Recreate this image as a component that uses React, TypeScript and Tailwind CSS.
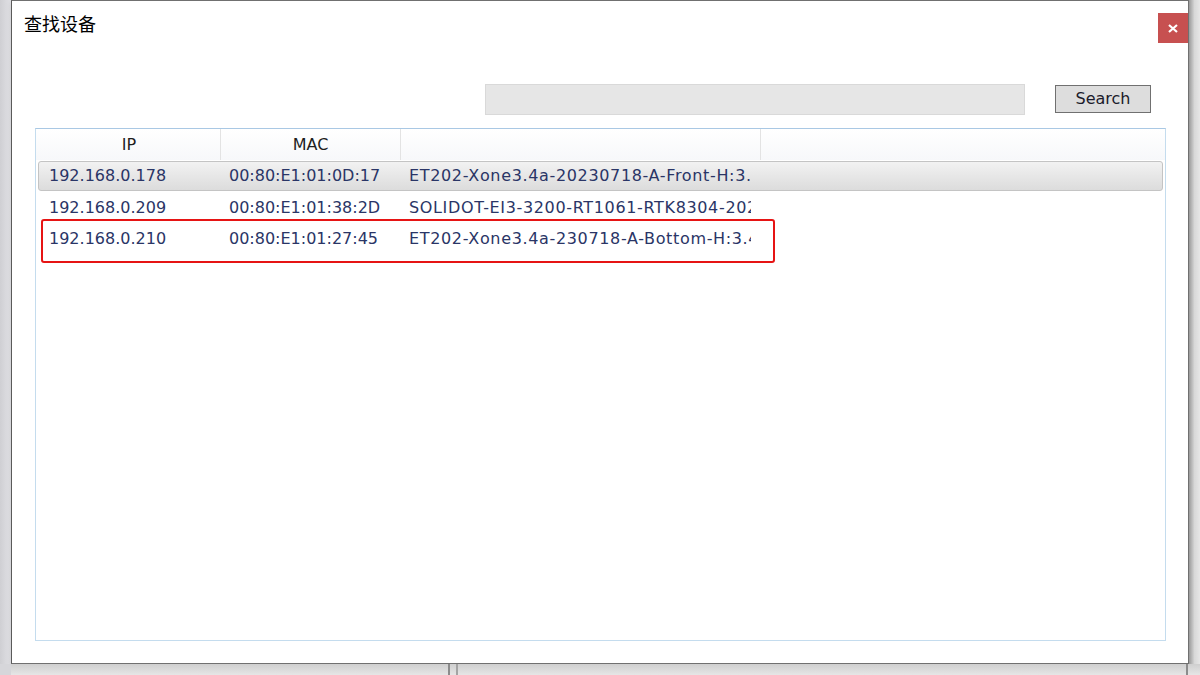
import React from 'react'

const rows = [
  { ip: '192.168.0.178', mac: '00:80:E1:01:0D:17', name: 'ET202-Xone3.4a-20230718-A-Front-H:3.4a', selected: true },
  { ip: '192.168.0.209', mac: '00:80:E1:01:38:2D', name: 'SOLIDOT-EI3-3200-RT1061-RTK8304-20230718' },
  { ip: '192.168.0.210', mac: '00:80:E1:01:27:45', name: 'ET202-Xone3.4a-230718-A-Bottom-H:3.4a', marked: true },
]

const font = { fontFamily: '"DejaVu Sans", "Noto Sans CJK SC", sans-serif' }

export default function App() {
  return (
    <div className="w-[1200px] h-[675px] overflow-hidden bg-[#e4e4e6] flex flex-col" style={font}>
      <div className="flex h-[664px]">
        {/* desktop strip on the left */}
        <div className="w-[11px] bg-gradient-to-r from-[#cfcfd3] to-[#e2e2e6]" />

        {/* dialog */}
        <div className="w-[1178px] h-[664px] bg-white border border-[#707070] border-l-[#5a5a5a] flex flex-col shadow-[2px_2px_6px_rgba(0,0,0,0.25)]">
          <div className="flex items-start justify-between pl-[12px] pt-[10px] h-[77px]">
            <span className="text-[18px] text-black leading-[24px]" style={{ fontFamily: '"Noto Sans CJK SC", sans-serif' }}>
              查找设备
            </span>
            <button className="mt-[2px] w-[30px] h-[30px] bg-[#c75050] flex items-center justify-center">
              <svg width="10" height="9" viewBox="0 0 10 9">
                <path d="M1 1 L9 8 M9 1 L1 8" stroke="white" strokeWidth="2.2" />
              </svg>
            </button>
          </div>

          {/* search bar */}
          <div className="flex items-center pl-[473px] h-[42px]">
            <div className="w-[540px] h-[31px] bg-[#e6e6e6] border border-[#d9d9d9]" />
            <button className="ml-[30px] w-[96px] h-[28px] bg-[#dddddd] border border-[#707070] text-[16px] text-[#1b1b2b] leading-none flex items-center justify-center">
              Search
            </button>
          </div>

          {/* device list */}
          <div className="ml-[23px] mt-[8px] w-[1131px] h-[513px] border border-[#c4dcee] border-t-[#a9c8e4] bg-white flex flex-col">
            <div className="flex h-[31px] bg-gradient-to-b from-white to-[#f7f8fa] text-[16px] text-[#1e1e1e]">
              <div className="w-[185px] pl-[2px] flex items-center justify-center border-r border-[#e3e3e3]">IP</div>
              <div className="w-[180px] flex items-center justify-center border-r border-[#e3e3e3]">MAC</div>
              <div className="w-[360px] border-r border-[#e3e3e3]" />
              <div className="flex-1" />
            </div>
            <div className="flex flex-col px-[2px] pt-[1px]">
              {rows.map((r) => (
                <div
                  key={r.ip}
                  className={
                    'flex items-center h-[30px] mb-[1.5px] text-[16px] text-[#2a3566] rounded-[3px] border ' +
                    (r.selected
                      ? 'border-[#c4c4c4] bg-gradient-to-b from-[#f2f2f2] to-[#dcdcdc]'
                      : r.marked
                        ? 'border-transparent relative'
                        : 'border-transparent')
                  }
                >
                  <div className="w-[182px] pl-[10px] whitespace-nowrap">{r.ip}</div>
                  <div className="w-[180px] pl-[8px] whitespace-nowrap">{r.mac}</div>
                  <div className="w-[350px] pl-[8px] whitespace-nowrap overflow-hidden tracking-[0.65px]">{r.name}</div>
                  {r.marked && (
                    <div className="absolute left-[2px] top-[-6px] w-[734px] h-[44px] border-2 border-[#e61414] rounded-[3px]" />
                  )}
                </div>
              ))}
            </div>
          </div>
        </div>

        <div className="flex-1 bg-gradient-to-r from-[#9a9a9a] via-[#d8d8d8] to-[#e6e6e6]" />
      </div>

      {/* desktop strip below */}
      <div className="flex h-[11px] bg-gradient-to-b from-[#cfcfcf] to-[#e6e6e6]">
        <div className="w-[11px] bg-[#d6d6da]" />
        <div className="w-[437px]" />
        <div className="w-[2px] bg-[#8c8c8c]" />
        <div className="w-[6px]" />
        <div className="w-[2px] bg-[#a4a4a4]" />
        <div className="w-[728px]" />
        <div className="w-[2px] bg-[#8c8c8c]" />
      </div>
    </div>
  )
}
